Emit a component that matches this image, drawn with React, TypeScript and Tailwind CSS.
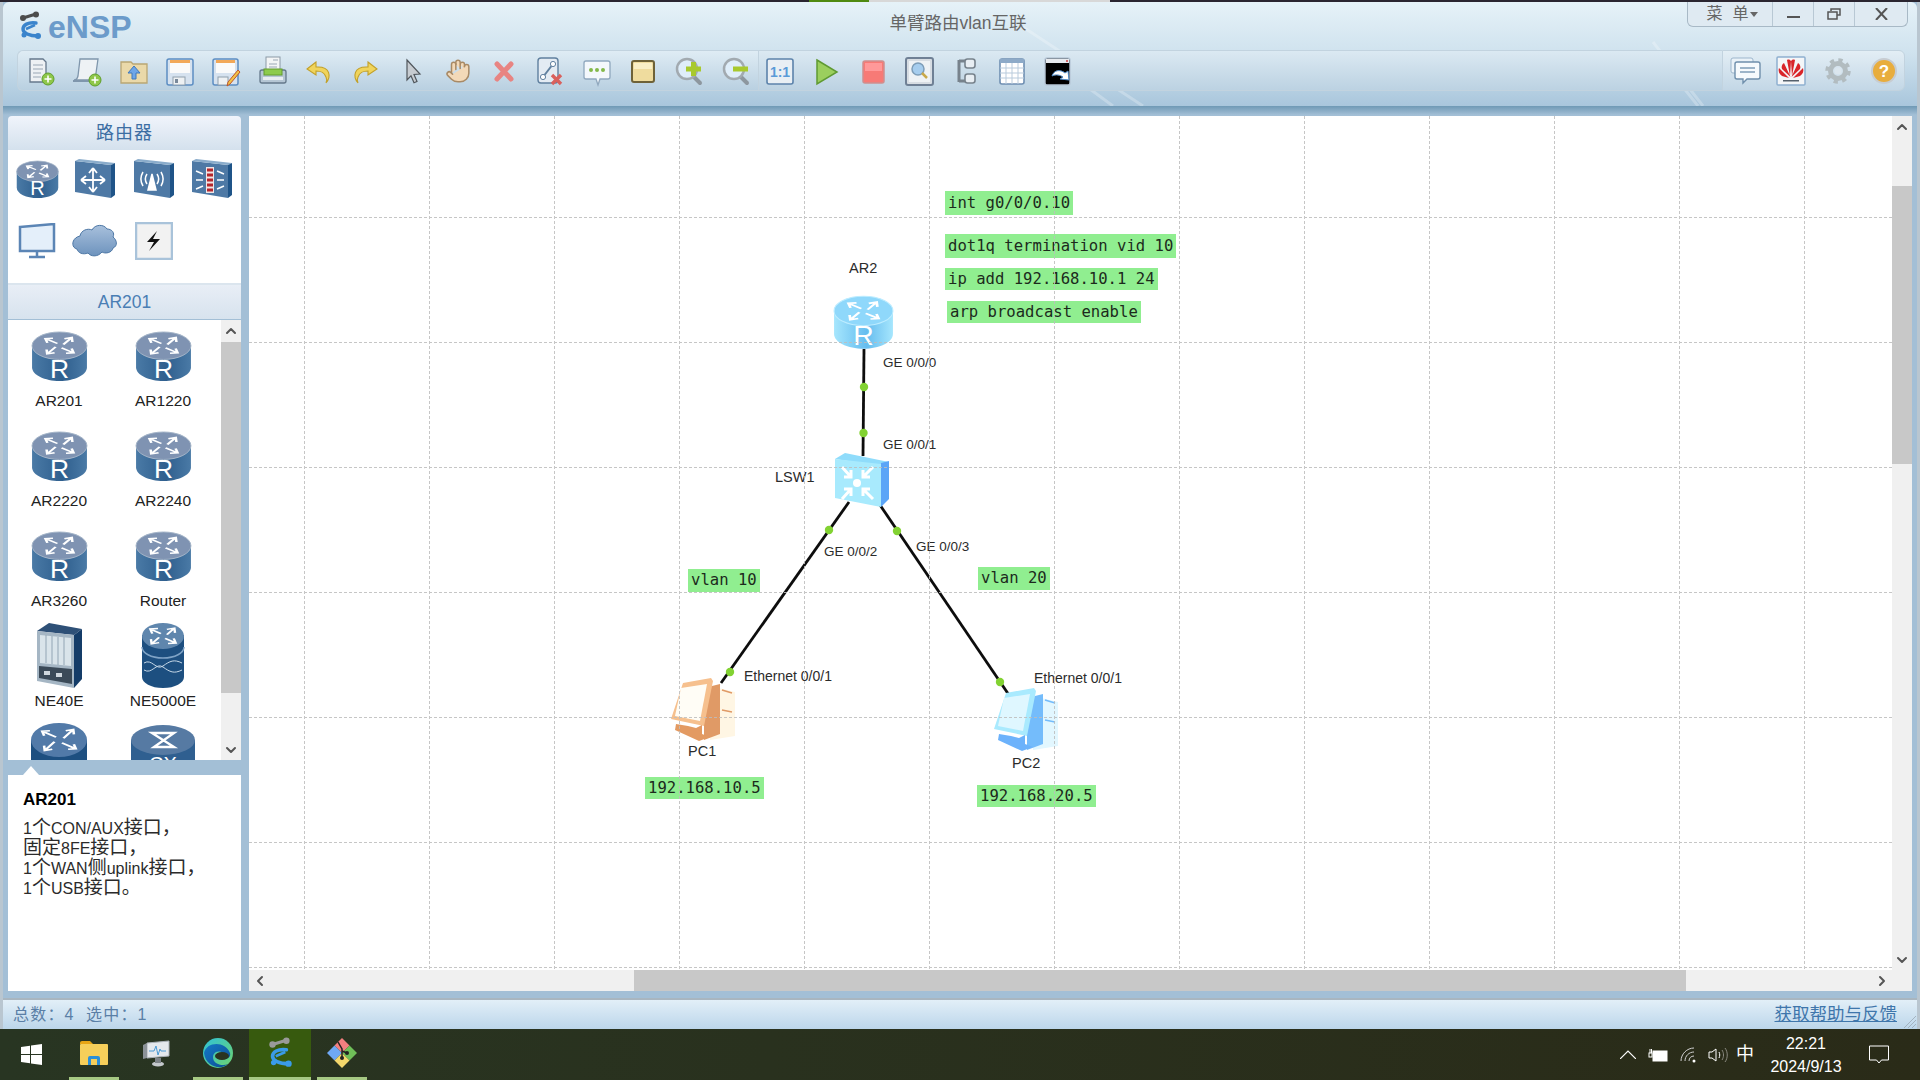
import type { ReactNode } from 'react'
import { ChevronDown, ChevronLeft, ChevronRight, ChevronUp, Hand } from 'lucide-react'

const cjk = "font-['Liberation_Sans','Noto_Sans_CJK_SC',sans-serif]"

function Plus({ x = 23, y = 24 }: { x?: number; y?: number }) {
  return (
    <g>
      <circle cx={x} cy={y} r="6" fill="#8fc74a" stroke="#5f9f2b" />
      <path d={`M${x - 3.5} ${y}h7M${x} ${y - 3.5}v7`} stroke="#fff" strokeWidth="1.6" />
    </g>
  )
}

function Tool({ children }: { children: ReactNode }) {
  return (
    <div className="w-[46.3px] h-full flex items-center justify-center shrink-0">
      <svg width="32" height="32" viewBox="0 0 32 32">{children}</svg>
    </div>
  )
}

const leftTools = [
  <g key="new"><path d="M5 4h13l3 3v20H5z" fill="#eef1f4" stroke="#66788c" strokeWidth="1.3" /><path d="M8 10h10M8 14h10M8 18h8M8 22h8" stroke="#9aa7b5" /><Plus /></g>,
  <g key="topo"><path d="M9 4h18l-3 21H3q3 0 4-4z" fill="#eef2f5" stroke="#7f96ac" strokeWidth="1.3" /><path d="M2 26h20" stroke="#7f96ac" strokeWidth="2" /><Plus x={24} y={25} /></g>,
  <g key="open"><path d="M3 7h10l2 2h14v19H3z" fill="#ead9a9" stroke="#b9a673" strokeWidth="1.3" /><path d="M16 11l6 7h-4v6h-4v-6h-4z" fill="#6ea6e8" stroke="#3f78bb" /></g>,
  <g key="save"><rect x="3" y="4" width="26" height="26" rx="2" fill="#d6e2ef" stroke="#5c8dc2" strokeWidth="1.5" /><rect x="6" y="5" width="20" height="3" fill="#f2a858" /><rect x="6" y="8" width="20" height="10" fill="#fafafa" /><rect x="9" y="22" width="12" height="8" fill="#eef1f3" stroke="#90a0ae" /><rect x="11" y="24" width="3" height="4" fill="#78889a" /></g>,
  <g key="saveas"><rect x="3" y="4" width="25" height="26" rx="2" fill="#d6e2ef" stroke="#5c8dc2" strokeWidth="1.5" /><rect x="6" y="5" width="19" height="3" fill="#f2a858" /><rect x="6" y="8" width="19" height="10" fill="#fafafa" /><rect x="8" y="22" width="10" height="8" fill="#eef1f3" stroke="#90a0ae" /><path d="M30 17l-10 12-3 2 1-4 10-12z" fill="#f3c344" stroke="#c0562c" /></g>,
  <g key="print"><rect x="9" y="2" width="14" height="15" fill="#f3f5f6" stroke="#8b99a6" /><path d="M16 5h5M12 9h8M12 12h8" stroke="#9aa7b5" /><rect x="3" y="15" width="26" height="13" rx="2" fill="#b5c6d4" stroke="#64788a" strokeWidth="1.3" /><rect x="7" y="14" width="18" height="6" fill="#8dcb4c" stroke="#629c2e" /><rect x="6" y="22" width="20" height="3" fill="#e8edf1" /></g>,
  <g key="undo"><path d="M13 7L4 14l9 6v-4c5 0 8 1 10 6 1 2 1 4 0 6 5-6 5-17-10-16z" fill="#f0d45c" stroke="#c2a02a" strokeWidth="1.1" /></g>,
  <g key="redo"><path d="M19 7l9 7-9 6v-4c-5 0-8 1-10 6-1 2-1 4 0 6-5-6-5-17 10-16z" fill="#f0d45c" stroke="#c2a02a" strokeWidth="1.1" /></g>,
  <g key="pointer"><path d="M11 5l13 14-6 .5 3 7-3 1.300-3-7L11 25z" fill="#c7ccd1" stroke="#50565c" strokeWidth="1.200" /></g>,
  <g key="hand"><Hand x={3} y={3} width={26} height={26} fill="#f3d9b8" stroke="#a88a66" strokeWidth={1.4} /></g>,
  <g key="x"><path d="M9 9l14 15M23 9L9 24" stroke="#e88482" strokeWidth="5" strokeLinecap="round" /></g>,
  <g key="unlink"><rect x="4" y="3" width="20" height="25" rx="3" fill="#e3ebf3" stroke="#60809f" strokeWidth="1.4" /><path d="M9 22l10-13" stroke="#60809f" strokeWidth="2" /><circle cx="9" cy="22" r="2.6" fill="#fff" stroke="#60809f" /><circle cx="19" cy="9" r="2.6" fill="#fff" stroke="#60809f" /><path d="M18 20l9 9M27 20l-9 9" stroke="#d9605d" strokeWidth="3.4" /></g>,
  <g key="note"><path d="M5 6h22a2 2 0 012 2v14a2 2 0 01-2 2h-8l-2 6-2-6H5a2 2 0 01-2-2V8a2 2 0 012-2z" fill="#f4f8fc" stroke="#90a8be" strokeWidth="1.3" /><circle cx="10" cy="15" r="2" fill="#83b94a" /><circle cx="16" cy="15" r="2" fill="#83b94a" /><circle cx="22" cy="15" r="2" fill="#83b94a" /></g>,
  <g key="rect"><rect x="5" y="6" width="22" height="21" rx="2" fill="#efdc9e" stroke="#6e6238" strokeWidth="2" /><rect x="7" y="8" width="18" height="6" fill="#f9efc6" /></g>,
  <g key="zoomin"><path d="M20 21l7 7" stroke="#8d979f" strokeWidth="4" strokeLinecap="round" /><circle cx="14" cy="14" r="10" fill="#dfeefa" stroke="#a2aab0" strokeWidth="2.5" /><path d="M13 14h15M20.500 7v14" stroke="#a8c92e" strokeWidth="5" /></g>,
  <g key="zoomout"><path d="M20 21l7 7" stroke="#8d979f" strokeWidth="4" strokeLinecap="round" /><circle cx="14" cy="14" r="10" fill="#dfeefa" stroke="#a2aab0" strokeWidth="2.5" /><path d="M13 14h15" stroke="#a8c92e" strokeWidth="5" /></g>,
]

const midTools = [
  <g key="fit"><rect x="3" y="4" width="26" height="25" rx="2" fill="#e9eff4" stroke="#5c83ab" strokeWidth="1.6" /><text x="16" y="22" textAnchor="middle" fontSize="14" fontWeight="700" fill="#5b9bd8" fontFamily="Liberation Sans">1:1</text></g>,
  <g key="play"><path d="M7 5l20 12L7 29z" fill="#9bcf5e" stroke="#5f9a32" strokeWidth="1.5" /></g>,
  <g key="stop"><rect x="6" y="6" width="21" height="22" rx="2" fill="#f77a76" stroke="#cf8f8f" strokeWidth="1.5" /><rect x="8" y="8" width="17" height="8" fill="#f99" /></g>,
  <g key="capture"><rect x="3" y="3" width="27" height="27" rx="2" fill="#d7dde3" stroke="#6f8095" strokeWidth="2" /><rect x="6" y="6" width="21" height="21" fill="#eef2f5" /><circle cx="15" cy="14" r="6" fill="#a6cdee" stroke="#7d9db8" strokeWidth="1.5" /><path d="M19 18l5 5" stroke="#c9a94a" strokeWidth="2.5" /></g>,
  <g key="tree"><path d="M10 5v22M10 6h7M10 26h7" stroke="#77828c" strokeWidth="3" /><rect x="16" y="4" width="10" height="9" rx="2.500" fill="#e8eef3" stroke="#77828c" strokeWidth="1.6" /><rect x="16" y="19" width="10" height="9" rx="2.500" fill="#e8eef3" stroke="#77828c" strokeWidth="1.6" /></g>,
  <g key="table"><rect x="4" y="4" width="24" height="25" rx="2" fill="#fff" stroke="#6f8fb2" strokeWidth="1.6" /><rect x="4" y="4" width="24" height="4" fill="#8daac8" /><path d="M10 8v21M16 8v21M22 8v21M4 13h24M4 18h24M4 23h24" stroke="#b9cbdc" /></g>,
  <g key="cli"><rect x="3" y="3" width="25" height="27" rx="2" fill="#000" stroke="#b8c8d8" strokeWidth="1.4" /><rect x="4" y="4" width="23" height="4" fill="#e7eaee" /><circle cx="25" cy="6" r="1" fill="#d04040" /><path d="M10 21c2-6 8-7 13-3l3-2 1 9-9-1 3-2c-3-2-7-3-11-1z" fill="#fff" stroke="#4d89c7" /></g>,
]

const rightTools = [
  <g key="chat"><rect x="2" y="3" width="22" height="15" rx="2" fill="#eaf2f8" stroke="#9db6cc" /><path d="M8 7h21a2 2 0 012 2v13a2 2 0 01-2 2H18l-4 4v-4H8a2 2 0 01-2-2V9a2 2 0 012-2z" fill="#f6fafd" stroke="#6f8fac" strokeWidth="1.4" /><path d="M11 13h15M11 17h15" stroke="#7f9db8" strokeWidth="1.5" /></g>,
  <g key="huawei"><rect x="2" y="2" width="28" height="28" rx="1" fill="#f4f6f8" stroke="#8fb0d0" strokeWidth="1.5" /><path d="M15.500 22L9 8c-2 1-3 4-2 6zM16.500 22L23 8c2 1 3 4 2 6zM15 21L12 5c2-1 3 0 4 1zM17 21l3-16c-2-1-3 0-4 1zM14 23L4 13c-1 3 0 6 3 8zM18 23l10-10c1 3 0 6-3 8z" fill="#d9252a" /><rect x="8" y="25" width="16" height="1.500" fill="#55606c" /></g>,
  <g key="gear"><circle cx="16" cy="16" r="7.500" fill="none" stroke="#b2bcc0" strokeWidth="5" /><circle cx="16" cy="16" r="11" fill="none" stroke="#b2bcc0" strokeWidth="3.500" strokeDasharray="4.300 4.340" /><circle cx="16" cy="16" r="3.500" fill="#dbe6ee" /></g>,
  <g key="help"><circle cx="16" cy="16" r="12" fill="#e8ad3d" stroke="#c7ccd1" strokeWidth="2" /><text x="16" y="22" textAnchor="middle" fontSize="17" fontWeight="700" fill="#fff" fontFamily="Liberation Sans">?</text></g>,
]

function LogoMark({ dark, blue, width, height }: { dark: string; blue: string; width: number; height: number }) {
  return (
    <svg width={width} height={height} viewBox="0 0 24 30">
      <path d="M5 7l13-4" stroke={dark} strokeWidth="3" strokeLinecap="round" />
      <circle cx="5" cy="7" r="3" fill={dark} />
      <circle cx="18" cy="3.500" r="3" fill={dark} />
      <path d="M18 12C10 11 5 14 5 18s6 7 15 7" fill="none" stroke={blue} strokeWidth="3.400" strokeLinecap="round" />
      <path d="M8 18l9-4" stroke={blue} strokeWidth="2.500" />
      <circle cx="20" cy="25" r="3" fill={blue} />
      <circle cx="6" cy="24" r="2.500" fill={blue} />
    </svg>
  )
}

const tones = {
  dark: { top: '#7f93b2', rim: '#a4b4c8', edge: '#2f5f8e', mid: '#4a7aa6' },
  cyan: { top: '#8fd8fb', rim: '#bcecff', edge: '#66bdef', mid: '#a6e6fd' },
}

function RouterIcon({ tone = 'dark', width = 57, height = 49 }: { tone?: 'dark' | 'cyan'; width?: number; height?: number }) {
  const c = tones[tone]
  return (
    <svg width={width} height={height} viewBox="0 0 58 50" className="block overflow-visible">
      <defs>
        <linearGradient id={`router-${tone}`} x1="0" x2="1" y1="0" y2="0">
          <stop offset="0" stopColor={c.mid} />
          <stop offset="0.55" stopColor={c.edge} />
          <stop offset="1" stopColor={c.mid} />
        </linearGradient>
      </defs>
      <path d="M1 14v22c0 8 13 14 28 14s28-6 28-14V14z" fill={`url(#router-${tone})`} />
      <ellipse cx="29" cy="14" rx="28" ry="14" fill={c.top} stroke={c.rim} />
      <g transform="translate(29 14) scale(1 .58)" stroke="#fff" strokeWidth="2.600" fill="none">
        {[35, 125, 215, 305].map((a) => (
          <path key={a} transform={`rotate(${a})`} d="M2-4L2-18M-3-13L2-19L7-13" />
        ))}
      </g>
      <text x="29" y="46.500" textAnchor="middle" fontSize="27" fill="#fff" fontFamily="Liberation Sans">R</text>
    </svg>
  )
}

function BoxIcon({ children }: { children: ReactNode }) {
  return (
    <svg width="42" height="42" viewBox="0 0 42 42">
      <path d="M1 3l36 4v33L1 34z" fill="#4e79a5" />
      <path d="M1 3l4-2 36 4-4 2z" fill="#8aaccb" />
      <path d="M37 7l4-2v32l-4 3z" fill="#1f5488" />
      {children}
    </svg>
  )
}

function CloudIcon() {
  return (
    <svg width="46" height="38" viewBox="0 0 46 38">
      <defs>
        <linearGradient id="cloud" x1="0" x2="0" y1="0" y2="1">
          <stop offset="0" stopColor="#a8c0dc" />
          <stop offset="1" stopColor="#6d93bd" />
        </linearGradient>
      </defs>
      <path d="M8 14c1-6 8-8 12-6 3-6 12-6 15-1 5 0 8 4 6 8 4 3 5 9 0 11-1 5-8 6-11 4-4 5-11 5-14 1-5 2-10 0-11-4-6-1-6-11 3-13z" fill="url(#cloud)" stroke="#4d77a5" />
    </svg>
  )
}

function ChassisIcon() {
  return (
    <svg width="46" height="65" viewBox="0 0 46 65" className="block -mb-[7px]">
      <path d="M1 8l12-8 33 6-8 6z" fill="#2e5077" />
      <path d="M38 12l8-6v50l-8 9z" fill="#143c68" />
      <path d="M1 8l37 4v53L1 58z" fill="#a5b6c4" />
      <path d="M4 12l31 3v28L4 40z" fill="#d9e4ea" />
      <path d="M10 12v28M16 13v28M22 14v28M28 14v28" stroke="#92a5b4" />
      <path d="M3 43l33 3v15L3 55z" fill="#3b4a58" />
      <rect x="8" y="48" width="6" height="4" fill="#cfd7dd" />
      <rect x="20" y="50" width="6" height="4" fill="#cfd7dd" />
    </svg>
  )
}

function StackIcon() {
  return (
    <svg width="44" height="65" viewBox="0 0 44 65" className="block -mb-[7px]">
      <path d="M1 12v42c0 6 9 11 21 11s21-5 21-11V12z" fill="#1d4f80" />
      <path d="M1 24c0 6 9 11 21 11s21-5 21-11" fill="none" stroke="#7fa3c6" strokeWidth="1.500" />
      <path d="M3 40c8-5 12 8 19 3s11-7 19-3M3 47c8 5 12-8 19-3s11 7 19 3" fill="none" stroke="#c6d8e8" />
      <ellipse cx="22" cy="13" rx="21" ry="13" fill="#5f86ad" />
      <g transform="translate(22 13) scale(1 .62)" stroke="#fff" strokeWidth="2.400" fill="none">
        {[35, 125, 215, 305].map((a) => (
          <path key={a} transform={`rotate(${a})`} d="M2-4L2-16M-3-11L2-17L7-11" />
        ))}
      </g>
    </svg>
  )
}

function CoreIcon() {
  return (
    <svg width="58" height="50" viewBox="0 0 58 50" className="block mb-[8px]">
      <path d="M1 17v25h56V17z" fill="#1d4f80" />
      <ellipse cx="29" cy="17" rx="28" ry="17" fill="#527aa8" />
      <g transform="translate(29 17) scale(1 .62)" stroke="#fff" strokeWidth="2.600" fill="none">
        {[35, 125, 215, 305].map((a) => (
          <path key={a} transform={`rotate(${a})`} d="M2-5L2-21M-3-16L2-22L7-16" />
        ))}
      </g>
    </svg>
  )
}

function CxIcon() {
  return (
    <svg width="66" height="50" viewBox="0 0 66 50" className="block mb-[6px]">
      <path d="M1 15v30h64V15z" fill="#2f5f90" />
      <ellipse cx="33" cy="15" rx="32" ry="15" fill="#567aa3" />
      <path d="M22 8h22L24 22h20z" fill="none" stroke="#fff" strokeWidth="2.400" />
      <text x="33" y="46" textAnchor="middle" fontSize="20" fill="#fff" fontFamily="Liberation Sans">CX</text>
    </svg>
  )
}

function SwitchIcon() {
  return (
    <svg width="54" height="54" viewBox="0 0 54 54">
      <path d="M0 6l10-6 44 9-8 4z" fill="#8fdcfb" />
      <path d="M46 10l8-2v38l-8 8z" fill="#5ba5f7" />
      <path d="M0 6l46 5v43L0 45z" fill="#a8eafd" />
      <circle cx="22" cy="30" r="4" fill="#fff" />
      <path d="M7 14l9 10M16 17v7h-7M38 14l-10 10M28 17v7h7M7 46l9-10M16 43v-7h-7M38 46l-10-10M28 43v-7h7" stroke="#fff" strokeWidth="3" fill="none" />
    </svg>
  )
}

function PcIcon({ tone }: { tone: 'orange' | 'blue' }) {
  const c = tone === 'orange'
    ? { light: '#fff6e4', body: '#e09a66', frame: '#f6c08e', screen: '#fffdf6', base: '#e39a62' }
    : { light: '#e2f7ff', body: '#74bcfb', frame: '#a9eafe', screen: '#dff7ff', base: '#6cb2fb' }
  return (
    <svg width="65" height="64" viewBox="0 0 65 64">
      <path d="M40 8l25 6v44l-25 4z" fill={c.light} />
      <path d="M34 10l16-4v50l-16 6z" fill={c.body} />
      <path d="M52 12l10 3M52 32l10 2" stroke={c.body} strokeWidth="1.500" />
      <path d="M13 5L41 0l2 3-9 45-33-7z" fill={c.frame} />
      <path d="M11 10l26-4-7 37-25-5z" fill={c.screen} />
      <path d="M6 46l12 2 8 2 6-3v9l8 3-11 4-24-11z" fill={c.base} />
    </svg>
  )
}

function Cap({ className, children }: { className: string; children: ReactNode }) {
  return <div className={`absolute h-5 leading-5 text-[#2b2b2b] whitespace-nowrap ${className}`}>{children}</div>
}

function Tag({ className, children }: { className: string; children: ReactNode }) {
  return (
    <div className={`absolute px-[3px] bg-[#90ee90] text-[15.6px] text-[#1c2a1c] whitespace-pre font-['DejaVu_Sans_Mono',monospace] ${className}`}>
      {children}
    </div>
  )
}

function Canvas() {
  const vLines = [304, 429, 554, 679, 804, 929, 1054, 1179, 1304, 1429, 1554, 1679, 1804]
  const hLines = [217, 342, 467, 592, 717, 842, 967]
  const dots = [[864, 387], [863.5, 433], [829, 530], [897, 531], [730, 672], [1000, 682]]
  return (
    <div className="relative flex-1 bg-white overflow-hidden">
      <svg className="absolute inset-0" width="1643" height="854" viewBox="249 116 1643 854">
        <g stroke="#0d0d0d" strokeWidth="2.800">
          <path d="M864 349L863 456" />
          <path d="M849 502L721 683" />
          <path d="M880 505L1009 695" />
        </g>
        {dots.map(([x, y]) => (
          <circle key={`${x}-${y}`} cx={x} cy={y} r="4.200" fill="#82d232" />
        ))}
      </svg>

      <Tag className="left-[696px] top-[75px] h-6 leading-6">int g0/0/0.10</Tag>
      <Tag className="left-[696px] top-[118px] h-6 leading-6">dot1q termination vid 10</Tag>
      <Tag className="left-[696px] top-[152px] h-[22px] leading-[22px]">ip add 192.168.10.1 24</Tag>
      <Tag className="left-[698px] top-[185px] h-[22px] leading-[22px]">arp broadcast enable</Tag>
      <Tag className="left-[439px] top-[453px] h-[23px] leading-[23px]">vlan 10</Tag>
      <Tag className="left-[729px] top-[451px] h-[23px] leading-[23px]">vlan 20</Tag>
      <Tag className="left-[396px] top-[661px] h-[22px] leading-[22px]">192.168.10.5</Tag>
      <Tag className="left-[728px] top-[669px] h-[22px] leading-[22px]">192.168.20.5</Tag>

      <div className="absolute left-[584px] top-[180px]"><RouterIcon tone="cyan" width={61} height={53} /></div>
      <div className="absolute left-[586px] top-[337px]"><SwitchIcon /></div>
      <div className="absolute left-[421px] top-[562px]"><PcIcon tone="orange" /></div>
      <div className="absolute left-[744px] top-[572px]"><PcIcon tone="blue" /></div>

      <Cap className="left-[600px] top-[142px] text-[14.5px]">AR2</Cap>
      <Cap className="left-[634px] top-[237px] text-[13.5px]">GE 0/0/0</Cap>
      <Cap className="left-[634px] top-[319px] text-[13.5px]">GE 0/0/1</Cap>
      <Cap className="left-[526px] top-[351px] text-[14.5px]">LSW1</Cap>
      <Cap className="left-[575px] top-[426px] text-[13.5px]">GE 0/0/2</Cap>
      <Cap className="left-[667px] top-[421px] text-[13.5px]">GE 0/0/3</Cap>
      <Cap className="left-[495px] top-[550px] text-[14px]">Ethernet 0/0/1</Cap>
      <Cap className="left-[785px] top-[552px] text-[14px]">Ethernet 0/0/1</Cap>
      <Cap className="left-[439px] top-[625px] text-[14.5px]">PC1</Cap>
      <Cap className="left-[763px] top-[637px] text-[14.5px]">PC2</Cap>

      <svg className="absolute inset-0" width="1643" height="854" viewBox="249 116 1643 854">
        <g stroke="#bdbdbd" strokeWidth="1" strokeDasharray="3 2" opacity="0.85">
          {vLines.map((x) => (
            <path key={x} d={`M${x + 0.5} 116V970`} />
          ))}
          {hLines.map((y) => (
            <path key={y} d={`M249 ${y + 0.5}H1892`} />
          ))}
        </g>
      </svg>
    </div>
  )
}

function ListItem({ label, children }: { label?: string; children: ReactNode }) {
  return (
    <div className="w-[104px] h-[100px] flex flex-col items-center">
      <div className="h-[50px] flex items-end justify-center">{children}</div>
      {label && <div className="mt-[10px] h-5 leading-5 text-[15.5px] text-[#222]">{label}</div>}
    </div>
  )
}

function Wide({ children }: { children: ReactNode }) {
  return <span className="text-[19px] leading-none">{children}</span>
}

function LeftPanel() {
  return (
    <div className="w-[233px] shrink-0 flex flex-col">
      <div className={`h-[34px] rounded-t-sm bg-gradient-to-b from-[#f0f4fb] to-[#d4e1ed] flex items-center justify-center text-[18px] tracking-[1px] text-[#3c6ea3] ${cjk}`}>路由器</div>
      <div className="h-[133px] bg-white grid grid-cols-4 auto-rows-[58px] gap-y-1 items-center justify-items-center">
        <RouterIcon width={43} height={39} />
        <BoxIcon><path d="M19 10v24M7 22h24M19 10l-4 5M19 10l4 5M19 34l-4-5M19 34l4-5M7 22l5-4M7 22l5 4M31 22l-5-4M31 22l-5 4" stroke="#fff" strokeWidth="1.800" fill="none" /></BoxIcon>
        <BoxIcon><path d="M15 32l4-16 4 16zM10 14c-3 5-3 9 0 14M28 14c3 5 3 9 0 14M14 16c-2 3-2 7 0 10M24 16c2 3 2 7 0 10" stroke="#fff" strokeWidth="1.500" fill="none" /><path d="M15 32l4-16 4 16z" fill="#fff" /></BoxIcon>
        <BoxIcon><rect x="15" y="9" width="8" height="26" fill="#f0e6e6" /><path d="M16 12h6M16 17h6M16 22h6M16 27h6M16 32h6" stroke="#b4262c" strokeWidth="3" /><path d="M5 13l7 3M5 22h7M5 31l7-3M26 13l7 3M26 22h7M26 31l7-3" stroke="#fff" strokeWidth="1.500" /></BoxIcon>
        <svg width="38" height="36" viewBox="0 0 38 36"><path d="M2 4l34-3v27H2z" fill="#e4effa" stroke="#5b85b5" strokeWidth="2.500" /><path d="M19 28v5M11 34h16" stroke="#5b85b5" strokeWidth="2.500" /></svg>
        <CloudIcon />
        <svg width="38" height="38" viewBox="0 0 38 38"><rect x="1" y="1" width="36" height="36" fill="#f2f2f2" stroke="#a9c3da" strokeWidth="2.500" /><path d="M22 9l-10 11h7l-5 9 11-12h-7z" fill="#111" /></svg>
      </div>
      <div className="h-[2px] bg-[#dbe5ee]" />
      <div className={`h-[34px] bg-gradient-to-b from-[#e8eef6] to-[#d7e3ee] flex items-center justify-center text-[17.5px] text-[#4a7eb4] ${cjk}`}>AR201</div>
      <div className="h-px bg-[#a3bfd6]" />
      <div className="h-[440px] bg-white flex overflow-hidden">
        <div className="w-[213px] pt-[11px] -ml-px flex flex-wrap content-start overflow-hidden">
          <ListItem label="AR201"><RouterIcon /></ListItem>
          <ListItem label="AR1220"><RouterIcon /></ListItem>
          <ListItem label="AR2220"><RouterIcon /></ListItem>
          <ListItem label="AR2240"><RouterIcon /></ListItem>
          <ListItem label="AR3260"><RouterIcon /></ListItem>
          <ListItem label="Router"><RouterIcon /></ListItem>
          <ListItem label="NE40E"><ChassisIcon /></ListItem>
          <ListItem label="NE5000E"><StackIcon /></ListItem>
          <ListItem><CoreIcon /></ListItem>
          <ListItem><CxIcon /></ListItem>
        </div>
        <div className="w-5 ml-px bg-[#f0f0f0] flex flex-col items-center">
          <div className="h-[22px] flex items-center"><ChevronUp size={16} strokeWidth={3} className="text-[#555]" /></div>
          <div className="w-full h-[351px] bg-[#c8c8c8]" />
          <div className="flex-1 flex items-end pb-[2px]"><ChevronDown size={16} strokeWidth={3} className="text-[#555]" /></div>
        </div>
      </div>
      <div className="h-[15px] pl-[15px] flex items-end">
        <div className="w-0 h-0 border-x-[8px] border-x-transparent border-b-[9px] border-b-white" />
      </div>
      <div className={`flex-1 bg-white px-[15px] pt-[15px] text-[16px] leading-5 text-[#2b2b2b] ${cjk}`}>
        <div className="text-[17px] font-bold text-black mb-[8px]">AR201</div>
        <div className="h-5">1<Wide>个</Wide>CON/AUX<Wide>接口，</Wide></div>
        <div className="h-5"><Wide>固定</Wide>8FE<Wide>接口，</Wide></div>
        <div className="h-5">1<Wide>个</Wide>WAN<Wide>侧</Wide>uplink<Wide>接口，</Wide></div>
        <div className="h-5">1<Wide>个</Wide>USB<Wide>接口。</Wide></div>
      </div>
    </div>
  )
}

function Header() {
  return (
    <div className="relative h-[104px] shrink-0 rounded-t-md bg-gradient-to-b from-[#e6f2f8] via-[#cfe2ee] to-[#a9c6dc]">
      <svg className="absolute left-0 top-0 pointer-events-none" width="1914" height="104" viewBox="0 0 1914 104">
        <path d="M1020 25L1140 104M1050 60L1110 104M1650 40L1700 104M1672 75L1695 104" stroke="#fff" strokeOpacity="0.25" strokeWidth="3" />
      </svg>
      <div className="relative h-[48px] flex">
        <div className="flex-1 flex items-start pl-[15px] pt-[9px] gap-[6px]">
          <LogoMark dark="#4c4c4c" blue="#3a84cc" width={24} height={30} />
          <span className={`text-[32px] leading-[32px] font-bold text-[#6c9bca] ${cjk}`}>eNSP</span>
        </div>
        <div className={`pt-[11px] mr-[10px] text-[17.500px] leading-5 text-[#666] ${cjk}`}>单臂路由vlan互联</div>
        <div className="flex-1 flex justify-end items-start pr-[9px]">
          <div className={`h-[25px] flex items-center rounded-b-md border border-t-0 border-[#a8b9c6] bg-[#dfeaf2] text-[#666] ${cjk}`}>
            <div className="w-[84px] h-full flex items-center justify-center gap-[10px] text-[16px] pl-1">
              <span>菜</span>
              <span className="flex items-center gap-px">单<span className="w-0 h-0 border-x-[4px] border-x-transparent border-t-[5px] border-t-[#666]" /></span>
            </div>
            <div className="w-[41px] h-full border-l border-[#b8c8d4] flex items-center justify-center">
              <div className="w-[13px] h-[2px] mt-[6px] bg-[#555]" />
            </div>
            <div className="w-[41px] h-full border-l border-[#b8c8d4] flex items-center justify-center">
              <svg width="14" height="12" viewBox="0 0 14 12"><path d="M4 3V1h9v6h-3M1 4h9v7H1z" fill="none" stroke="#555" strokeWidth="1.500" /></svg>
            </div>
            <div className="w-[53px] h-full border-l border-[#b8c8d4] flex items-center justify-center">
              <svg width="13" height="12" viewBox="0 0 13 12"><path d="M1 0l11 12M12 0L1 12" stroke="#555" strokeWidth="2" /></svg>
            </div>
          </div>
        </div>
      </div>
      <div className="relative h-[41px] ml-[14px] mr-[12px] flex">
        <div className="w-[741px] rounded-l-md bg-gradient-to-b from-[#dfecf4] to-[#b9d0e1] border-y border-[#c2d3df] border-l flex">
          {leftTools.map((t) => <Tool key={t.key}>{t}</Tool>)}
        </div>
        <div className="flex-1 bg-gradient-to-b from-[#dbe9f2] to-[#bcd2e2] border-y border-l border-[#c2d3df]">
          <div className="h-full flex -ml-[2px]">
            {midTools.map((t) => <Tool key={t.key}>{t}</Tool>)}
          </div>
        </div>
        <div className="w-[183px] rounded-r-md bg-gradient-to-b from-[#e3eef5] to-[#c3d7e6] border-y border-x border-[#c2d3df] flex justify-start">
          <div className="h-full flex -ml-px">
            {rightTools.map((t) => <Tool key={t.key}>{t}</Tool>)}
          </div>
        </div>
      </div>
    </div>
  )
}

function TaskItem({ children, active = false, line = 'bg-transparent' }: { children: ReactNode; active?: boolean; line?: string }) {
  return (
    <div className={`w-[62px] flex flex-col ${active ? 'bg-[#375a0e]' : ''}`}>
      <div className="flex-1 flex items-center justify-center">{children}</div>
      <div className={`h-[3px] ${active ? 'mx-0' : 'mx-[6px]'} ${line}`} />
    </div>
  )
}

function Taskbar() {
  return (
    <div className="h-[51px] shrink-0 flex bg-gradient-to-r from-[#283522] to-[#2a2b18] text-white">
      <div className="w-[63px] flex items-center justify-center">
        <svg width="21" height="21" viewBox="0 0 21 21"><path d="M0 3l9-1.300V10H0zM10 1.500L21 0v10H10zM0 11h9v8.300L0 18zM10 11h11v10l-11-1.500z" fill="#fff" /></svg>
      </div>
      <TaskItem line="bg-[#a6c983]">
        <svg width="28" height="24" viewBox="0 0 28 24"><path d="M0 2a2 2 0 012-2h8l3 3H0z" fill="#e8a514" /><rect y="3" width="28" height="21" rx="1" fill="#f6cf5a" /><path d="M8 24v-7a2 2 0 012-2h8a2 2 0 012 2v7h-3v-6h-6v6z" fill="#2b8fd8" /></svg>
      </TaskItem>
      <TaskItem>
        <svg width="28" height="28" viewBox="0 0 28 28"><path d="M5 4l22-2v15L5 19z" fill="#e4e8ec" stroke="#a9b0b6" /><path d="M7 12h5l2-5 2 9 2-6 1 2h5" stroke="#4a9ad4" fill="none" /><path d="M1 6l4-2v15l-4 1z" fill="#8b9298" /><ellipse cx="16" cy="25" rx="6" ry="2.500" fill="#c4c8cc" /><rect x="13" y="19" width="6" height="5" fill="#7d8388" /></svg>
      </TaskItem>
      <TaskItem line="bg-[#a6c983]">
        <svg width="30" height="30" viewBox="0 0 30 30">
          <defs>
            <linearGradient id="edge-a" x1="0" x2="1" y1="0" y2="1"><stop offset="0" stopColor="#2fc1d8" /><stop offset="1" stopColor="#6fd36c" /></linearGradient>
            <linearGradient id="edge-b" x1="0" x2="1" y1="0" y2="1"><stop offset="0" stopColor="#1477c4" /><stop offset="1" stopColor="#0c4f96" /></linearGradient>
          </defs>
          <circle cx="15" cy="15" r="15" fill="url(#edge-a)" />
          <path d="M1 15C3 4 22 2 27 15c1 4-2 6-7 6 3-5-2-9-7-7-4 2-4 8 0 11 3 2 8 3 12 1-6 6-22 4-24-11z" fill="url(#edge-b)" />
          <ellipse cx="19" cy="18" rx="7" ry="4" fill="#2a3320" />
        </svg>
      </TaskItem>
      <TaskItem active line="bg-[#a6c983]">
        <LogoMark dark="#9a9a9a" blue="#3a9be8" width={26} height={32} />
      </TaskItem>
      <TaskItem line="bg-[#a6c983]">
        <svg width="30" height="30" viewBox="0 0 30 30">
          <path d="M15 0l7.500 7.500-7.500 7.500-7.500-7.500z" fill="#f47f7f" />
          <path d="M7.500 7.500L15 15l-7.500 7.500L0 15z" fill="#6fa8f4" />
          <path d="M22.500 7.500L30 15l-7.500 7.500L15 15z" fill="#6fbf58" />
          <path d="M15 15l7.500 7.500L15 30l-7.500-7.500z" fill="#f4d86c" />
          <path d="M11 4l4 7v9M15 13l5 2" stroke="#222" strokeWidth="1.500" fill="none" />
          <circle cx="15" cy="20" r="2" fill="#222" /><circle cx="20" cy="15" r="2" fill="#222" />
        </svg>
      </TaskItem>
      <div className="flex-1" />
      <div className="flex items-center">
        <div className="w-[30px] flex justify-center">
          <svg width="16" height="9" viewBox="0 0 16 9"><path d="M0 9l8-8 8 8" fill="none" stroke="#fff" strokeWidth="1.200" /></svg>
        </div>
        <div className="w-[30px] flex justify-center">
          <svg width="20" height="14" viewBox="0 0 20 14"><rect x="5" y="3" width="14" height="10" fill="#fff" stroke="#fff" /><rect x="1" y="5" width="3" height="4" fill="none" stroke="#fff" /><path d="M2 5V1M3.500 5V1" stroke="#fff" /></svg>
        </div>
        <div className="w-[30px] flex justify-center">
          <svg width="17" height="16" viewBox="0 0 17 16"><circle cx="14" cy="14" r="1.500" fill="#fff" /><g fill="none" stroke="#d0d0d0"><path d="M9 14c0-3 2-5 5-5" /><path d="M5 14c0-5 4-9 9-9" /><path d="M1 14C1 7 7 1 14 1" /></g></svg>
        </div>
        <div className="w-[30px] flex justify-center">
          <svg width="20" height="16" viewBox="0 0 20 16"><path d="M1 5h3l4-3v12L4 11H1z" fill="none" stroke="#fff" /><path d="M11 5c1 2 1 4 0 6" stroke="#fff" fill="none" /><path d="M14 3c2 3 2 7 0 10M17 1c3 4 3 10 0 14" stroke="#8a8a80" fill="none" /></svg>
        </div>
        <div className={`w-[30px] -ml-[3px] mr-[3px] text-center text-[18px] ${cjk}`}>中</div>
        <div className={`w-[86px] text-center text-[16px] leading-[23px] ${cjk}`}>
          <div>22:21</div>
          <div>2024/9/13</div>
        </div>
        <div className="w-[60px] flex justify-center">
          <svg width="20" height="20" viewBox="0 0 20 20"><path d="M.500 1h19v14h-7l-2.500 3-2.500-3h-7z" fill="none" stroke="#fff" /></svg>
        </div>
        <div className="w-[11px]" />
      </div>
    </div>
  )
}

export default function App() {
  return (
    <div className={`w-[1920px] h-[1080px] flex flex-col overflow-hidden bg-[#222] ${cjk}`}>
      <div className="h-[2px] shrink-0 flex bg-[#2a2530]">
        <div className="w-[809px]" />
        <div className="w-[60px] bg-[#4f8a10]" />
        <div className="w-[241px] bg-[#d8d8d8]" />
      </div>
      <div className="flex-1 min-h-0 flex flex-col border-x-[3px] border-[#b9c6d0] bg-[#a3bfd6]">
        <Header />
        <div className="flex-1 min-h-0 flex gap-2 pl-[5px] pr-[5px] pt-[10px] pb-[7px] bg-gradient-to-b from-[#6f99b5] from-0% via-[#a3bfd6] via-[1%] to-[#a3bfd6]">
          <LeftPanel />
          <div className="flex-1 min-w-0 flex flex-col">
            <div className="flex-1 min-h-0 flex">
              <Canvas />
              <div className="w-5 bg-[#f0f0f0] flex flex-col items-center">
                <div className="h-[21px] flex items-center"><ChevronUp size={16} strokeWidth={3} className="text-[#555]" /></div>
                <div className="h-[49px]" />
                <div className="w-full h-[278px] bg-[#c8c8c8]" />
                <div className="flex-1 flex items-end pb-[2px]"><ChevronDown size={16} strokeWidth={3} className="text-[#555]" /></div>
              </div>
            </div>
            <div className="h-[21px] flex bg-[#f0f0f0]">
              <div className="w-[21px] flex items-center justify-center"><ChevronLeft size={16} strokeWidth={3} className="text-[#555]" /></div>
              <div className="w-[364px]" />
              <div className="w-[1052px] bg-[#c8c8c8]" />
              <div className="flex-1 flex items-center justify-end pr-[22px]"><ChevronRight size={16} strokeWidth={3} className="text-[#555]" /></div>
            </div>
          </div>
        </div>
        <div className="h-[31px] shrink-0 flex items-center justify-between pl-[10px] border-t-2 border-[#a9b6c0] bg-gradient-to-b from-[#e2eff8] to-[#bcd6ea]">
          <span className="text-[16px] text-[#5a7fa6] tracking-[1.200px] whitespace-pre">总数：4  选中：1</span>
          <div className="h-full flex items-center gap-[5px]">
            <span className="text-[17.500px] text-[#3f76ab] underline">获取帮助与反馈</span>
            <svg width="15" height="15" viewBox="0 0 15 15" className="self-end"><path d="M14 2L2 14M14 6l-8 8M14 10l-4 4" stroke="#a3b3c0" /></svg>
          </div>
        </div>
      </div>
      <Taskbar />
    </div>
  )
}
